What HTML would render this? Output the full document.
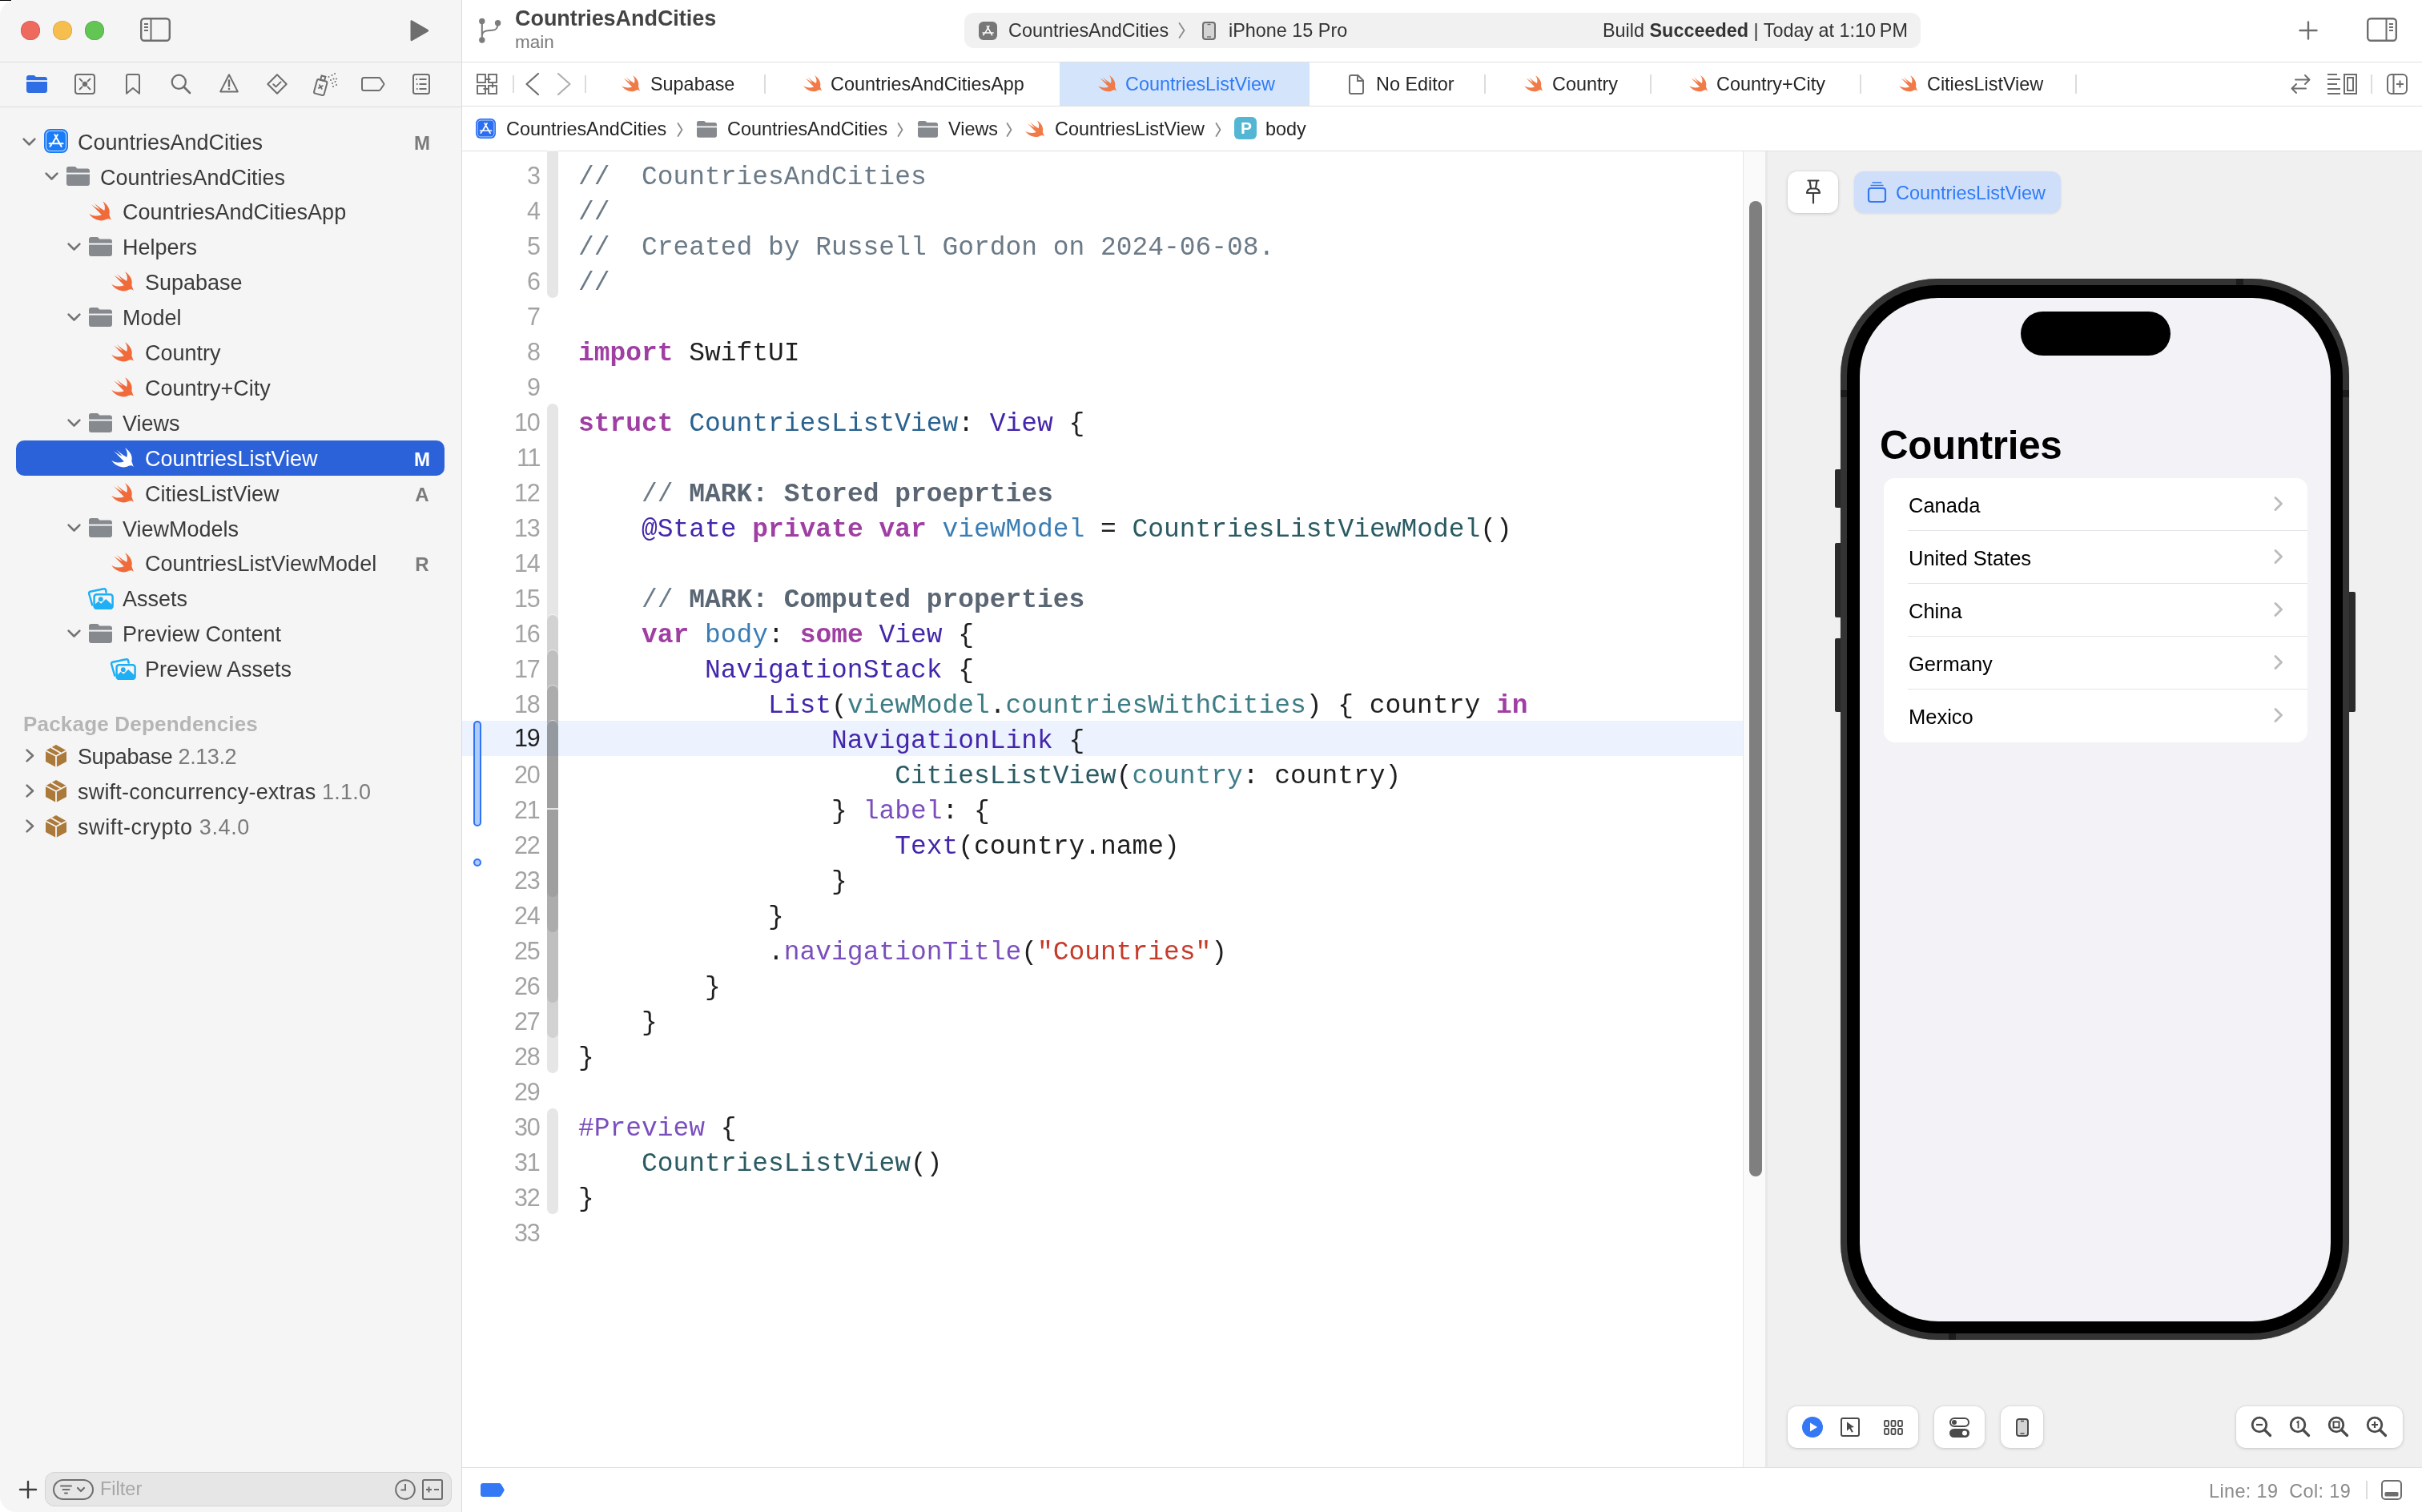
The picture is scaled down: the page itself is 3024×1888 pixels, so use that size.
<!DOCTYPE html>
<html><head><meta charset="utf-8">
<style>
*{box-sizing:border-box;margin:0;padding:0}
html,body{width:3024px;height:1888px;overflow:hidden;background:#fff}
body{position:relative;font-family:"Liberation Sans",sans-serif;color:#262626}
.a{position:absolute}
.t{position:absolute;white-space:nowrap;line-height:0;will-change:transform}
svg{position:absolute;overflow:visible}
.cl{position:absolute;left:721.5px;white-space:pre;line-height:0;font-family:"Liberation Mono",monospace;font-size:32.93px;color:#1f1f1f;will-change:transform}
.k{color:#a03fa3;font-weight:bold}
.c{color:#6b7a87}
.m{color:#5a6673;font-weight:bold}
.ty{color:#4326ab}
.dt{color:#2a628f}
.do{color:#3a7db4}
.pt{color:#2a5a62}
.pp{color:#3e7d86}
.of{color:#7a4fbd}
.st{color:#c63a2a}
</style></head><body>

<div class="a" style="left:0;top:0;width:577px;height:1888px;background:#f5f5f5;border-radius:20px 0 0 20px"></div>
<div class="a" style="left:0;top:0;width:14px;height:1px;background:#000"></div>
<div class="a" style="left:576px;top:0;width:1px;height:1888px;background:#dcdcdc"></div>
<div class="a" style="left:0;top:77px;width:576px;height:1px;background:#dcdcdc"></div>
<div class="a" style="left:0;top:133px;width:576px;height:1px;background:#dcdcdc"></div>
<div class="a" style="left:26px;top:26px;width:24px;height:24px;border-radius:50%;background:#ee6a5f;box-shadow:inset 0 0 0 0.6px #d9534a"></div>
<div class="a" style="left:66px;top:26px;width:24px;height:24px;border-radius:50%;background:#f5be4f;box-shadow:inset 0 0 0 0.6px #dba43c"></div>
<div class="a" style="left:106px;top:26px;width:24px;height:24px;border-radius:50%;background:#62c554;box-shadow:inset 0 0 0 0.6px #4ea843"></div>
<svg style="left:28px;top:171.5px" width="17" height="11" viewBox="0 0 17 11"><path d="M1.6 1.6l6.9 6.9 6.9-6.9" fill="none" stroke="#737373" stroke-width="2.6" stroke-linecap="round" stroke-linejoin="round"/></svg>
<svg style="left:55px;top:161.0px" width="30" height="30" viewBox="0 0 30 30"><rect width="30" height="30" rx="7.5" fill="#1a7cf7"/><rect x="2.5" y="2.5" width="25" height="25" rx="5.2" fill="none" stroke="#c4dcfc" stroke-width="1.1"/><path d="M13.4 7.2l8.3 14.8M16.8 7.2L10.9 17.4M6.6 18.3h17M7.4 21.8l1.6-2" fill="none" stroke="#fff" stroke-width="2" stroke-linecap="round"/></svg>
<div class="t" style="left:97px;top:177.64px;font-size:27px;color:#3b3b3b">CountriesAndCities</div>
<div class="t" style="left:517px;top:178.68px;font-size:24px;font-weight:bold;color:#7b7b7b;width:20px;text-align:center">M</div>
<svg style="left:56px;top:215.4px" width="17" height="11" viewBox="0 0 17 11"><path d="M1.6 1.6l6.9 6.9 6.9-6.9" fill="none" stroke="#737373" stroke-width="2.6" stroke-linecap="round" stroke-linejoin="round"/></svg>
<svg style="left:83px;top:208.4px" width="29" height="24.0" viewBox="0 0 29 24"><path fill="#868a8f" d="M2.6 0h7c1.1 0 1.7.3 2.5 1.1l1.2 1.3H26.2c1.6 0 2.8 1.2 2.8 2.8V21.3c0 1.5-1.2 2.7-2.7 2.7H2.7C1.2 24 0 22.8 0 21.3V2.6C0 1.2 1.2 0 2.6 0z"/><rect x="0" y="7.6" width="29" height="2" fill="#f5f5f5"/></svg>
<div class="t" style="left:125px;top:221.54px;font-size:27px;color:#3b3b3b">CountriesAndCities</div>
<svg style="left:111px;top:251.3px" width="29" height="25.1" viewBox="0 0 30 26"><path fill="#f06a3a" d="M17.6,0.2C24.3,4.4 28,11 26.2,17.6L28.9,25C27.2,22.8 25,22.4 22.3,23.6C16.5,27.1 6.5,25.2 0.2,16.6C5,19.6 11.5,20 16.4,18L3.2,4.5C7.8,7.8 11.3,10 14.5,11.6L6.9,2.8C11.5,6.6 15.5,10 19.9,12.4C21.4,8.5 20.5,4 17.6,0.2Z"/></svg>
<div class="t" style="left:153px;top:265.44px;font-size:27px;color:#3b3b3b">CountriesAndCitiesApp</div>
<svg style="left:84px;top:303.2px" width="17" height="11" viewBox="0 0 17 11"><path d="M1.6 1.6l6.9 6.9 6.9-6.9" fill="none" stroke="#737373" stroke-width="2.6" stroke-linecap="round" stroke-linejoin="round"/></svg>
<svg style="left:111px;top:296.2px" width="29" height="24.0" viewBox="0 0 29 24"><path fill="#868a8f" d="M2.6 0h7c1.1 0 1.7.3 2.5 1.1l1.2 1.3H26.2c1.6 0 2.8 1.2 2.8 2.8V21.3c0 1.5-1.2 2.7-2.7 2.7H2.7C1.2 24 0 22.8 0 21.3V2.6C0 1.2 1.2 0 2.6 0z"/><rect x="0" y="7.6" width="29" height="2" fill="#f5f5f5"/></svg>
<div class="t" style="left:153px;top:309.34px;font-size:27px;color:#3b3b3b">Helpers</div>
<svg style="left:139px;top:339.1px" width="29" height="25.1" viewBox="0 0 30 26"><path fill="#f06a3a" d="M17.6,0.2C24.3,4.4 28,11 26.2,17.6L28.9,25C27.2,22.8 25,22.4 22.3,23.6C16.5,27.1 6.5,25.2 0.2,16.6C5,19.6 11.5,20 16.4,18L3.2,4.5C7.8,7.8 11.3,10 14.5,11.6L6.9,2.8C11.5,6.6 15.5,10 19.9,12.4C21.4,8.5 20.5,4 17.6,0.2Z"/></svg>
<div class="t" style="left:181px;top:353.24px;font-size:27px;color:#3b3b3b">Supabase</div>
<svg style="left:84px;top:391.0px" width="17" height="11" viewBox="0 0 17 11"><path d="M1.6 1.6l6.9 6.9 6.9-6.9" fill="none" stroke="#737373" stroke-width="2.6" stroke-linecap="round" stroke-linejoin="round"/></svg>
<svg style="left:111px;top:384.0px" width="29" height="24.0" viewBox="0 0 29 24"><path fill="#868a8f" d="M2.6 0h7c1.1 0 1.7.3 2.5 1.1l1.2 1.3H26.2c1.6 0 2.8 1.2 2.8 2.8V21.3c0 1.5-1.2 2.7-2.7 2.7H2.7C1.2 24 0 22.8 0 21.3V2.6C0 1.2 1.2 0 2.6 0z"/><rect x="0" y="7.6" width="29" height="2" fill="#f5f5f5"/></svg>
<div class="t" style="left:153px;top:397.14px;font-size:27px;color:#3b3b3b">Model</div>
<svg style="left:139px;top:426.9px" width="29" height="25.1" viewBox="0 0 30 26"><path fill="#f06a3a" d="M17.6,0.2C24.3,4.4 28,11 26.2,17.6L28.9,25C27.2,22.8 25,22.4 22.3,23.6C16.5,27.1 6.5,25.2 0.2,16.6C5,19.6 11.5,20 16.4,18L3.2,4.5C7.8,7.8 11.3,10 14.5,11.6L6.9,2.8C11.5,6.6 15.5,10 19.9,12.4C21.4,8.5 20.5,4 17.6,0.2Z"/></svg>
<div class="t" style="left:181px;top:441.04px;font-size:27px;color:#3b3b3b">Country</div>
<svg style="left:139px;top:470.8px" width="29" height="25.1" viewBox="0 0 30 26"><path fill="#f06a3a" d="M17.6,0.2C24.3,4.4 28,11 26.2,17.6L28.9,25C27.2,22.8 25,22.4 22.3,23.6C16.5,27.1 6.5,25.2 0.2,16.6C5,19.6 11.5,20 16.4,18L3.2,4.5C7.8,7.8 11.3,10 14.5,11.6L6.9,2.8C11.5,6.6 15.5,10 19.9,12.4C21.4,8.5 20.5,4 17.6,0.2Z"/></svg>
<div class="t" style="left:181px;top:484.94px;font-size:27px;color:#3b3b3b">Country+City</div>
<svg style="left:84px;top:522.7px" width="17" height="11" viewBox="0 0 17 11"><path d="M1.6 1.6l6.9 6.9 6.9-6.9" fill="none" stroke="#737373" stroke-width="2.6" stroke-linecap="round" stroke-linejoin="round"/></svg>
<svg style="left:111px;top:515.7px" width="29" height="24.0" viewBox="0 0 29 24"><path fill="#868a8f" d="M2.6 0h7c1.1 0 1.7.3 2.5 1.1l1.2 1.3H26.2c1.6 0 2.8 1.2 2.8 2.8V21.3c0 1.5-1.2 2.7-2.7 2.7H2.7C1.2 24 0 22.8 0 21.3V2.6C0 1.2 1.2 0 2.6 0z"/><rect x="0" y="7.6" width="29" height="2" fill="#f5f5f5"/></svg>
<div class="t" style="left:153px;top:528.84px;font-size:27px;color:#3b3b3b">Views</div>
<div class="a" style="left:20px;top:550.1px;width:535px;height:44px;border-radius:10px;background:#2c62d9"></div>
<svg style="left:139px;top:558.5999999999999px" width="29" height="25.1" viewBox="0 0 30 26"><path fill="#ffffff" d="M17.6,0.2C24.3,4.4 28,11 26.2,17.6L28.9,25C27.2,22.8 25,22.4 22.3,23.6C16.5,27.1 6.5,25.2 0.2,16.6C5,19.6 11.5,20 16.4,18L3.2,4.5C7.8,7.8 11.3,10 14.5,11.6L6.9,2.8C11.5,6.6 15.5,10 19.9,12.4C21.4,8.5 20.5,4 17.6,0.2Z"/></svg>
<div class="t" style="left:181px;top:572.74px;font-size:27px;color:#ffffff">CountriesListView</div>
<div class="t" style="left:517px;top:573.78px;font-size:24px;font-weight:bold;color:#ffffff;width:20px;text-align:center">M</div>
<svg style="left:139px;top:602.5px" width="29" height="25.1" viewBox="0 0 30 26"><path fill="#f06a3a" d="M17.6,0.2C24.3,4.4 28,11 26.2,17.6L28.9,25C27.2,22.8 25,22.4 22.3,23.6C16.5,27.1 6.5,25.2 0.2,16.6C5,19.6 11.5,20 16.4,18L3.2,4.5C7.8,7.8 11.3,10 14.5,11.6L6.9,2.8C11.5,6.6 15.5,10 19.9,12.4C21.4,8.5 20.5,4 17.6,0.2Z"/></svg>
<div class="t" style="left:181px;top:616.64px;font-size:27px;color:#3b3b3b">CitiesListView</div>
<div class="t" style="left:517px;top:617.68px;font-size:24px;font-weight:bold;color:#7b7b7b;width:20px;text-align:center">A</div>
<svg style="left:84px;top:654.4px" width="17" height="11" viewBox="0 0 17 11"><path d="M1.6 1.6l6.9 6.9 6.9-6.9" fill="none" stroke="#737373" stroke-width="2.6" stroke-linecap="round" stroke-linejoin="round"/></svg>
<svg style="left:111px;top:647.4px" width="29" height="24.0" viewBox="0 0 29 24"><path fill="#868a8f" d="M2.6 0h7c1.1 0 1.7.3 2.5 1.1l1.2 1.3H26.2c1.6 0 2.8 1.2 2.8 2.8V21.3c0 1.5-1.2 2.7-2.7 2.7H2.7C1.2 24 0 22.8 0 21.3V2.6C0 1.2 1.2 0 2.6 0z"/><rect x="0" y="7.6" width="29" height="2" fill="#f5f5f5"/></svg>
<div class="t" style="left:153px;top:660.54px;font-size:27px;color:#3b3b3b">ViewModels</div>
<svg style="left:139px;top:690.3px" width="29" height="25.1" viewBox="0 0 30 26"><path fill="#f06a3a" d="M17.6,0.2C24.3,4.4 28,11 26.2,17.6L28.9,25C27.2,22.8 25,22.4 22.3,23.6C16.5,27.1 6.5,25.2 0.2,16.6C5,19.6 11.5,20 16.4,18L3.2,4.5C7.8,7.8 11.3,10 14.5,11.6L6.9,2.8C11.5,6.6 15.5,10 19.9,12.4C21.4,8.5 20.5,4 17.6,0.2Z"/></svg>
<div class="t" style="left:181px;top:704.44px;font-size:27px;color:#3b3b3b">CountriesListViewModel</div>
<div class="t" style="left:517px;top:705.48px;font-size:24px;font-weight:bold;color:#7b7b7b;width:20px;text-align:center">R</div>
<svg style="left:109px;top:733.6999999999999px" width="33" height="27.0" viewBox="0 0 33 27"><path d="M6.5 22.5L2.2 7.5c-.4-1.3.3-2.5 1.6-2.8L20.5 1.3c1.3-.3 2.4.6 2.7 1.9l.6 3.4" fill="none" stroke="#1eaff5" stroke-width="2.5"/><rect x="8.6" y="8.3" width="23" height="17.5" rx="3" fill="none" stroke="#1eaff5" stroke-width="2.5"/><path d="M8.6 21.5l5.3-4.8 3.3 3 6-5.8 8.4 7.8v2.5c0 1.6-1.3 2.8-2.8 2.8H11.4c-1.6 0-2.8-1.2-2.8-2.8z" fill="#1eaff5"/><circle cx="16.8" cy="14.2" r="2.9" fill="#1eaff5"/></svg>
<div class="t" style="left:153px;top:748.34px;font-size:27px;color:#3b3b3b">Assets</div>
<svg style="left:84px;top:786.1px" width="17" height="11" viewBox="0 0 17 11"><path d="M1.6 1.6l6.9 6.9 6.9-6.9" fill="none" stroke="#737373" stroke-width="2.6" stroke-linecap="round" stroke-linejoin="round"/></svg>
<svg style="left:111px;top:779.1px" width="29" height="24.0" viewBox="0 0 29 24"><path fill="#868a8f" d="M2.6 0h7c1.1 0 1.7.3 2.5 1.1l1.2 1.3H26.2c1.6 0 2.8 1.2 2.8 2.8V21.3c0 1.5-1.2 2.7-2.7 2.7H2.7C1.2 24 0 22.8 0 21.3V2.6C0 1.2 1.2 0 2.6 0z"/><rect x="0" y="7.6" width="29" height="2" fill="#f5f5f5"/></svg>
<div class="t" style="left:153px;top:792.24px;font-size:27px;color:#3b3b3b">Preview Content</div>
<svg style="left:137px;top:821.5px" width="33" height="27.0" viewBox="0 0 33 27"><path d="M6.5 22.5L2.2 7.5c-.4-1.3.3-2.5 1.6-2.8L20.5 1.3c1.3-.3 2.4.6 2.7 1.9l.6 3.4" fill="none" stroke="#1eaff5" stroke-width="2.5"/><rect x="8.6" y="8.3" width="23" height="17.5" rx="3" fill="none" stroke="#1eaff5" stroke-width="2.5"/><path d="M8.6 21.5l5.3-4.8 3.3 3 6-5.8 8.4 7.8v2.5c0 1.6-1.3 2.8-2.8 2.8H11.4c-1.6 0-2.8-1.2-2.8-2.8z" fill="#1eaff5"/><circle cx="16.8" cy="14.2" r="2.9" fill="#1eaff5"/></svg>
<div class="t" style="left:181px;top:836.14px;font-size:27px;color:#3b3b3b">Preview Assets</div>
<div class="t" style="left:29px;top:903.99px;font-size:26px;font-weight:bold;color:#b5b5b5;letter-spacing:0.2px">Package Dependencies</div>
<svg style="left:32px;top:935px" width="11" height="17" viewBox="0 0 11 17"><path d="M1.6 1.6l7.4 6.9-7.4 6.9" fill="none" stroke="#737373" stroke-width="2.6" stroke-linecap="round" stroke-linejoin="round"/></svg>
<svg style="left:57px;top:930px" width="26" height="28.0" viewBox="0 0 26 28"><path d="M13 0L26 7.2V21L13 28 0 21V7.2z" fill="#ab7a3a"/><path d="M0 7.2l13 6.8 13-6.8M13 14V28M6.8 3.4l12 6.8" fill="none" stroke="#f5f5f5" stroke-width="1.8"/></svg>
<div class="t" style="left:97px;top:944.64px;font-size:27px;color:#3b3b3b;letter-spacing:-0.4px">Supabase <span style="color:#7b7b7b">2.13.2</span></div>
<svg style="left:32px;top:979px" width="11" height="17" viewBox="0 0 11 17"><path d="M1.6 1.6l7.4 6.9-7.4 6.9" fill="none" stroke="#737373" stroke-width="2.6" stroke-linecap="round" stroke-linejoin="round"/></svg>
<svg style="left:57px;top:974px" width="26" height="28.0" viewBox="0 0 26 28"><path d="M13 0L26 7.2V21L13 28 0 21V7.2z" fill="#ab7a3a"/><path d="M0 7.2l13 6.8 13-6.8M13 14V28M6.8 3.4l12 6.8" fill="none" stroke="#f5f5f5" stroke-width="1.8"/></svg>
<div class="t" style="left:97px;top:988.64px;font-size:27px;color:#3b3b3b;letter-spacing:0.2px">swift-concurrency-extras <span style="color:#7b7b7b">1.1.0</span></div>
<svg style="left:32px;top:1023px" width="11" height="17" viewBox="0 0 11 17"><path d="M1.6 1.6l7.4 6.9-7.4 6.9" fill="none" stroke="#737373" stroke-width="2.6" stroke-linecap="round" stroke-linejoin="round"/></svg>
<svg style="left:57px;top:1018px" width="26" height="28.0" viewBox="0 0 26 28"><path d="M13 0L26 7.2V21L13 28 0 21V7.2z" fill="#ab7a3a"/><path d="M0 7.2l13 6.8 13-6.8M13 14V28M6.8 3.4l12 6.8" fill="none" stroke="#f5f5f5" stroke-width="1.8"/></svg>
<div class="t" style="left:97px;top:1032.64px;font-size:27px;color:#3b3b3b;letter-spacing:0.6px">swift-crypto <span style="color:#7b7b7b">3.4.0</span></div>
<svg style="left:175px;top:22px" width="38" height="30" viewBox="0 0 38 30"><rect x="1.2" y="1.2" width="35.6" height="27.6" rx="4" fill="none" stroke="#6e6e6e" stroke-width="2.4"/><path d="M13.5 1.5v27M5 8h5M5 12h5M5 16h5" fill="none" stroke="#6e6e6e" stroke-width="2"/></svg>
<svg style="left:510px;top:24px" width="27" height="28" viewBox="0 0 27 28"><path d="M2.5 2.2v23.6c0 1.1 1 1.7 2 1.1l20-11.5c.9-.6.9-1.8 0-2.4l-20-11.5C3.5.9 2.5 1.1 2.5 2.2z" fill="#6e6e6e"/></svg>
<svg style="left:33px;top:94px" width="26" height="22" viewBox="0 0 26 22"><path fill="#2f6de5" d="M3 0h5.5c1 0 1.6.3 2.3 1l1 1H23c1.7 0 3 1.3 3 3v14c0 1.7-1.3 3-3 3H3c-1.7 0-3-1.3-3-3V3c0-1.7 1.3-3 3-3z"/><rect x="0" y="6.2" width="26" height="1.8" fill="#f5f5f5"/></svg>
<svg style="left:93px;top:92px" width="26" height="26" viewBox="0 0 26 26"><rect x="1" y="1" width="24" height="24" rx="3" fill="none" stroke="#6e6e6e" stroke-width="2"/><circle cx="13" cy="13" r="3.2" fill="#6e6e6e"/><path d="M6.5 6.5l3 3M19.5 6.5l-3 3M6.5 19.5l3-3M19.5 19.5l-3-3" stroke="#6e6e6e" stroke-width="1.8" stroke-linecap="round"/></svg>
<svg style="left:157px;top:92px" width="18" height="26" viewBox="0 0 18 26"><path d="M1 24.8V3c0-1.1.9-2 2-2h12c1.1 0 2 .9 2 2v21.8L9 18z" fill="none" stroke="#6e6e6e" stroke-width="2" stroke-linejoin="round"/></svg>
<svg style="left:213px;top:92px" width="26" height="26" viewBox="0 0 26 26"><circle cx="10.3" cy="10.3" r="8.6" fill="none" stroke="#6e6e6e" stroke-width="2.2"/><path d="M16.5 16.5l7.5 7.5" stroke="#6e6e6e" stroke-width="2.6" stroke-linecap="round"/></svg>
<svg style="left:274px;top:92px" width="24" height="24" viewBox="0 0 24 24"><path d="M12 1.3L1.2 22.4h21.6z" fill="none" stroke="#6e6e6e" stroke-width="2" stroke-linejoin="round"/><path d="M12 8.5v7" stroke="#6e6e6e" stroke-width="2.4" stroke-linecap="round"/><circle cx="12" cy="19" r="1.3" fill="#6e6e6e"/></svg>
<svg style="left:333px;top:92px" width="26" height="26" viewBox="0 0 26 26"><path d="M13 1.3L24.7 13 13 24.7 1.3 13z" fill="none" stroke="#6e6e6e" stroke-width="2" stroke-linejoin="round"/><path d="M8.3 13.2l3.2 3.2 6-6" fill="none" stroke="#6e6e6e" stroke-width="2" stroke-linecap="round" stroke-linejoin="round"/></svg>
<svg style="left:391px;top:91px" width="31" height="28" viewBox="0 0 31 28"><g transform="rotate(15 9 17)"><rect x="3" y="9" width="13" height="18" rx="2" fill="none" stroke="#6e6e6e" stroke-width="2"/><rect x="7" y="3.5" width="5" height="5.5" fill="none" stroke="#6e6e6e" stroke-width="2"/><path d="M7 15l5 5M12 15l-5 5" stroke="#6e6e6e" stroke-width="1.8"/></g><g fill="#6e6e6e"><circle cx="19.5" cy="5" r="1"/><circle cx="23.5" cy="3" r="1"/><circle cx="27" cy="1" r="1"/><circle cx="22" cy="9" r="1"/><circle cx="25.5" cy="7.5" r="1"/><circle cx="29" cy="7.5" r="1"/><circle cx="24" cy="13" r="1"/><circle cx="27.5" cy="11" r="1"/><circle cx="25" cy="17" r="1"/><circle cx="29" cy="15" r="1"/></g></svg>
<svg style="left:451px;top:96px" width="30" height="18" viewBox="0 0 30 18"><path d="M3.5 1h18.5c.8 0 1.5.4 1.9 1l4.3 6.2c.3.5.3 1.1 0 1.6l-4.3 6.2c-.4.6-1.1 1-1.9 1H3.5C2.1 17 1 15.9 1 14.5v-11C1 2.1 2.1 1 3.5 1z" fill="none" stroke="#6e6e6e" stroke-width="2"/></svg>
<svg style="left:515px;top:92px" width="22" height="26" viewBox="0 0 22 26"><rect x="1" y="1" width="20" height="24" rx="2.5" fill="none" stroke="#6e6e6e" stroke-width="2"/><path d="M8.5 7h9M8.5 13h9M8.5 19h9" stroke="#6e6e6e" stroke-width="2"/><path d="M4.5 7h1.5M5 13h1.5M5 19h1.5" stroke="#6e6e6e" stroke-width="2"/></svg>
<div class="a" style="left:56px;top:1838px;width:508px;height:43px;border-radius:12px;background:#e6e6e6;border:1px solid #d3d3d3"></div>
<svg style="left:24px;top:1849px" width="22" height="22" viewBox="0 0 22 22"><path d="M11 1v20M1 11h20" stroke="#3d3d3d" stroke-width="2.4" stroke-linecap="round"/></svg>
<svg style="left:66px;top:1847px" width="51" height="26" viewBox="0 0 51 26"><rect x="1" y="1" width="49" height="24" rx="12" fill="none" stroke="#6e6e6e" stroke-width="2"/><path d="M10 8.5h13M12.5 13h8M15 17.5h3" stroke="#6e6e6e" stroke-width="2" stroke-linecap="round"/><path d="M31 11l4 4 4-4" fill="none" stroke="#6e6e6e" stroke-width="2.2" stroke-linecap="round" stroke-linejoin="round"/></svg>
<div class="t" style="left:125px;top:1858.86px;font-size:23.5px;color:#a6a6a6">Filter</div>
<svg style="left:493px;top:1847px" width="26" height="26" viewBox="0 0 26 26"><circle cx="13" cy="13" r="11.8" fill="none" stroke="#6e6e6e" stroke-width="2"/><path d="M13 6v7.5H7.5" fill="none" stroke="#6e6e6e" stroke-width="2"/></svg>
<svg style="left:527px;top:1847px" width="26" height="26" viewBox="0 0 26 26"><rect x="1" y="1" width="24" height="24" rx="1.5" fill="none" stroke="#6e6e6e" stroke-width="2"/><path d="M5 13h7M8.5 9.5v7M15 13h6" stroke="#6e6e6e" stroke-width="2"/></svg>
<div class="a" style="left:577px;top:77px;width:2447px;height:1px;background:#e0e0e0"></div>
<div class="a" style="left:577px;top:132px;width:2447px;height:1px;background:#e0e0e0"></div>
<div class="a" style="left:577px;top:188px;width:2447px;height:1px;background:#e0e0e0"></div>
<div class="a" style="left:577px;top:1832px;width:2447px;height:1px;background:#e0e0e0"></div>
<svg style="left:597px;top:22px" width="30" height="32" viewBox="0 0 30 32"><g fill="#7c7c7c"><circle cx="4.8" cy="4.5" r="3.7"/><circle cx="4.8" cy="28" r="3.7"/><circle cx="24.6" cy="6.8" r="3.7"/></g><path d="M4.8 4.5V28M24.6 6.8C24.6 13 23 15.6 18 15.8L12 16.2C7.5 16.6 4.8 18.5 4.8 22.5" fill="none" stroke="#7c7c7c" stroke-width="2.1"/></svg>
<div class="t" style="left:643px;top:23.14px;font-size:27px;font-weight:bold;color:#444;letter-spacing:-0.05px">CountriesAndCities</div>
<div class="t" style="left:643px;top:52.80px;font-size:22.5px;color:#7b7b7b">main</div>
<div class="a" style="left:1204px;top:16px;width:1194px;height:44px;border-radius:12px;background:#f1f1f1"></div>
<svg style="left:1222px;top:27px" width="23" height="23" viewBox="0 0 30 30"><rect width="30" height="30" rx="7.5" fill="#777777"/><path d="M13.4 7.2l8.3 14.8M16.8 7.2L10.9 17.4M6.6 18.3h17M7.4 21.8l1.6-2" fill="none" stroke="#fff" stroke-width="2" stroke-linecap="round"/></svg>
<div class="t" style="left:1259px;top:37.89px;font-size:23.4px;color:#333">CountriesAndCities</div>
<svg style="left:1471px;top:27px" width="9" height="22" viewBox="0 0 9 22"><path d="M1.5 2l6 9-6 9" fill="none" stroke="#8a8a8a" stroke-width="1.8" stroke-linecap="round"/></svg>
<svg style="left:1501px;top:27px" width="17" height="23" viewBox="0 0 17 23"><rect x="1" y="1" width="15" height="21" rx="3" fill="#d4d4d4" stroke="#6e6e6e" stroke-width="2"/><path d="M6 19h5" stroke="#6e6e6e" stroke-width="1.4"/><path d="M6.5 3.5h4" stroke="#6e6e6e" stroke-width="1.4"/></svg>
<div class="t" style="left:1534px;top:37.89px;font-size:23.4px;color:#333">iPhone 15 Pro</div>
<div class="t" style="right:642px;top:37.9px;font-size:23.4px;color:#333">Build <b>Succeeded</b> | Today at 1:10&#8201;PM</div>
<svg style="left:2870px;top:26px" width="24" height="24" viewBox="0 0 24 24"><path d="M12 1.5v21M1.5 12h21" stroke="#6e6e6e" stroke-width="2.4" stroke-linecap="round"/></svg>
<svg style="left:2955px;top:22px" width="38" height="30" viewBox="0 0 38 30"><rect x="1.2" y="1.2" width="35.6" height="27.6" rx="4" fill="none" stroke="#6e6e6e" stroke-width="2.4"/><path d="M24.5 1.5v27M28 8h5M28 12h5M28 16h5" fill="none" stroke="#6e6e6e" stroke-width="2"/></svg>
<svg style="left:594px;top:91px" width="28" height="28" viewBox="0 0 28 28"><g fill="none" stroke="#6e6e6e" stroke-width="1.9"><rect x="2" y="2" width="10" height="10"/><rect x="16" y="2" width="10" height="10"/><rect x="2" y="16" width="10" height="10"/><rect x="16" y="16" width="10" height="10"/><path d="M12 8h6.5M21 12v6.5M9.5 20H16"/></g></svg>
<div class="a" style="left:640px;top:94px;width:1.5px;height:22px;background:#dcdcdc"></div>
<svg style="left:655px;top:90px" width="19" height="30" viewBox="0 0 19 30"><path d="M17 2L2.5 15 17 28" fill="none" stroke="#6e6e6e" stroke-width="2.2" stroke-linecap="round" stroke-linejoin="round"/></svg>
<svg style="left:695px;top:90px" width="19" height="30" viewBox="0 0 19 30"><path d="M2 2l14.5 13L2 28" fill="none" stroke="#b0b0b0" stroke-width="2.2" stroke-linecap="round" stroke-linejoin="round"/></svg>
<div class="a" style="left:730px;top:94px;width:1.5px;height:22px;background:#dcdcdc"></div>
<div class="a" style="left:1323px;top:78px;width:312px;height:54px;background:#d4e4fb"></div>
<svg style="left:776px;top:94px" width="24" height="20.8" viewBox="0 0 30 26"><path fill="#f07a48" d="M17.6,0.2C24.3,4.4 28,11 26.2,17.6L28.9,25C27.2,22.8 25,22.4 22.3,23.6C16.5,27.1 6.5,25.2 0.2,16.6C5,19.6 11.5,20 16.4,18L3.2,4.5C7.8,7.8 11.3,10 14.5,11.6L6.9,2.8C11.5,6.6 15.5,10 19.9,12.4C21.4,8.5 20.5,4 17.6,0.2Z"/></svg>
<div class="t" style="left:812px;top:105.39px;font-size:23.4px;color:#262626">Supabase</div>
<svg style="left:1003px;top:94px" width="24" height="20.8" viewBox="0 0 30 26"><path fill="#f07a48" d="M17.6,0.2C24.3,4.4 28,11 26.2,17.6L28.9,25C27.2,22.8 25,22.4 22.3,23.6C16.5,27.1 6.5,25.2 0.2,16.6C5,19.6 11.5,20 16.4,18L3.2,4.5C7.8,7.8 11.3,10 14.5,11.6L6.9,2.8C11.5,6.6 15.5,10 19.9,12.4C21.4,8.5 20.5,4 17.6,0.2Z"/></svg>
<div class="t" style="left:1037px;top:105.39px;font-size:23.4px;color:#262626">CountriesAndCitiesApp</div>
<svg style="left:1371px;top:94px" width="24" height="20.8" viewBox="0 0 30 26"><path fill="#f07a48" d="M17.6,0.2C24.3,4.4 28,11 26.2,17.6L28.9,25C27.2,22.8 25,22.4 22.3,23.6C16.5,27.1 6.5,25.2 0.2,16.6C5,19.6 11.5,20 16.4,18L3.2,4.5C7.8,7.8 11.3,10 14.5,11.6L6.9,2.8C11.5,6.6 15.5,10 19.9,12.4C21.4,8.5 20.5,4 17.6,0.2Z"/></svg>
<div class="t" style="left:1405px;top:105.39px;font-size:23.4px;color:#2f7cf6">CountriesListView</div>
<svg style="left:1684px;top:93px" width="19" height="25" viewBox="0 0 19 25"><path d="M3 1h8.5L18 7.5V22c0 1.1-.9 2-2 2H3c-1.1 0-2-.9-2-2V3c0-1.1.9-2 2-2z" fill="none" stroke="#6e6e6e" stroke-width="2"/><path d="M11 1v7h7" fill="none" stroke="#6e6e6e" stroke-width="2"/></svg>
<div class="t" style="left:1718px;top:105.39px;font-size:23.4px;color:#262626">No Editor</div>
<svg style="left:1903px;top:94px" width="24" height="20.8" viewBox="0 0 30 26"><path fill="#f07a48" d="M17.6,0.2C24.3,4.4 28,11 26.2,17.6L28.9,25C27.2,22.8 25,22.4 22.3,23.6C16.5,27.1 6.5,25.2 0.2,16.6C5,19.6 11.5,20 16.4,18L3.2,4.5C7.8,7.8 11.3,10 14.5,11.6L6.9,2.8C11.5,6.6 15.5,10 19.9,12.4C21.4,8.5 20.5,4 17.6,0.2Z"/></svg>
<div class="t" style="left:1938px;top:105.39px;font-size:23.4px;color:#262626">Country</div>
<svg style="left:2109px;top:94px" width="24" height="20.8" viewBox="0 0 30 26"><path fill="#f07a48" d="M17.6,0.2C24.3,4.4 28,11 26.2,17.6L28.9,25C27.2,22.8 25,22.4 22.3,23.6C16.5,27.1 6.5,25.2 0.2,16.6C5,19.6 11.5,20 16.4,18L3.2,4.5C7.8,7.8 11.3,10 14.5,11.6L6.9,2.8C11.5,6.6 15.5,10 19.9,12.4C21.4,8.5 20.5,4 17.6,0.2Z"/></svg>
<div class="t" style="left:2143px;top:105.39px;font-size:23.4px;color:#262626">Country+City</div>
<svg style="left:2371px;top:94px" width="24" height="20.8" viewBox="0 0 30 26"><path fill="#f07a48" d="M17.6,0.2C24.3,4.4 28,11 26.2,17.6L28.9,25C27.2,22.8 25,22.4 22.3,23.6C16.5,27.1 6.5,25.2 0.2,16.6C5,19.6 11.5,20 16.4,18L3.2,4.5C7.8,7.8 11.3,10 14.5,11.6L6.9,2.8C11.5,6.6 15.5,10 19.9,12.4C21.4,8.5 20.5,4 17.6,0.2Z"/></svg>
<div class="t" style="left:2406px;top:105.39px;font-size:23.4px;color:#262626">CitiesListView</div>
<div class="a" style="left:954px;top:93px;width:1.5px;height:24px;background:#dcdcdc"></div>
<div class="a" style="left:1853px;top:93px;width:1.5px;height:24px;background:#dcdcdc"></div>
<div class="a" style="left:2060px;top:93px;width:1.5px;height:24px;background:#dcdcdc"></div>
<div class="a" style="left:2322px;top:93px;width:1.5px;height:24px;background:#dcdcdc"></div>
<div class="a" style="left:2591px;top:93px;width:1.5px;height:24px;background:#dcdcdc"></div>
<svg style="left:2860px;top:92px" width="25" height="26" viewBox="0 0 25 26"><path d="M6 7.5h17.5M18 2l5.5 5.5L18 13M19 18.5H1.5M7 13l-5.5 5.5L7 24" fill="none" stroke="#6e6e6e" stroke-width="2" stroke-linecap="round" stroke-linejoin="round"/></svg>
<svg style="left:2906px;top:92px" width="37" height="26" viewBox="0 0 37 26"><path d="M0 1h12M0 7h16M0 13h12M0 19h16M0 25h16" stroke="#6e6e6e" stroke-width="2"/><rect x="21" y="1" width="15" height="24" fill="none" stroke="#6e6e6e" stroke-width="2"/><rect x="25" y="5" width="7" height="16" fill="none" stroke="#6e6e6e" stroke-width="2"/></svg>
<div class="a" style="left:2960px;top:93px;width:1.5px;height:24px;background:#dcdcdc"></div>
<svg style="left:2980px;top:92px" width="26" height="26" viewBox="0 0 26 26"><rect x="1" y="1" width="24" height="24" rx="5" fill="none" stroke="#6e6e6e" stroke-width="2"/><path d="M8.5 1v24M16.5 8.5v9M12 13h9" stroke="#6e6e6e" stroke-width="2"/></svg>
<svg style="left:594px;top:148px" width="25" height="25" viewBox="0 0 30 30"><rect width="30" height="30" rx="7.5" fill="#2c6ef2"/><rect x="2.5" y="2.5" width="25" height="25" rx="5.2" fill="none" stroke="#c4dcfc" stroke-width="1.1"/><path d="M13.4 7.2l8.3 14.8M16.8 7.2L10.9 17.4M6.6 18.3h17M7.4 21.8l1.6-2" fill="none" stroke="#fff" stroke-width="2" stroke-linecap="round"/></svg>
<div class="t" style="left:632px;top:160.89px;font-size:23.4px;color:#262626">CountriesAndCities</div>
<svg style="left:845px;top:152px" width="8" height="20" viewBox="0 0 8 20"><path d="M1.5 2l5 8-5 8" fill="none" stroke="#8a8a8a" stroke-width="1.8" stroke-linecap="round"/></svg>
<svg style="left:870px;top:151px" width="25" height="20.7" viewBox="0 0 29 24"><path fill="#868a8f" d="M2.6 0h7c1.1 0 1.7.3 2.5 1.1l1.2 1.3H26.2c1.6 0 2.8 1.2 2.8 2.8V21.3c0 1.5-1.2 2.7-2.7 2.7H2.7C1.2 24 0 22.8 0 21.3V2.6C0 1.2 1.2 0 2.6 0z"/><rect x="0" y="7.6" width="29" height="2" fill="#ffffff"/></svg>
<div class="t" style="left:908px;top:160.89px;font-size:23.4px;color:#262626">CountriesAndCities</div>
<svg style="left:1120px;top:152px" width="8" height="20" viewBox="0 0 8 20"><path d="M1.5 2l5 8-5 8" fill="none" stroke="#8a8a8a" stroke-width="1.8" stroke-linecap="round"/></svg>
<svg style="left:1146px;top:151px" width="25" height="20.7" viewBox="0 0 29 24"><path fill="#868a8f" d="M2.6 0h7c1.1 0 1.7.3 2.5 1.1l1.2 1.3H26.2c1.6 0 2.8 1.2 2.8 2.8V21.3c0 1.5-1.2 2.7-2.7 2.7H2.7C1.2 24 0 22.8 0 21.3V2.6C0 1.2 1.2 0 2.6 0z"/><rect x="0" y="7.6" width="29" height="2" fill="#ffffff"/></svg>
<div class="t" style="left:1184px;top:160.89px;font-size:23.4px;color:#262626">Views</div>
<svg style="left:1256px;top:152px" width="8" height="20" viewBox="0 0 8 20"><path d="M1.5 2l5 8-5 8" fill="none" stroke="#8a8a8a" stroke-width="1.8" stroke-linecap="round"/></svg>
<svg style="left:1280px;top:150px" width="25" height="21.7" viewBox="0 0 30 26"><path fill="#f07a48" d="M17.6,0.2C24.3,4.4 28,11 26.2,17.6L28.9,25C27.2,22.8 25,22.4 22.3,23.6C16.5,27.1 6.5,25.2 0.2,16.6C5,19.6 11.5,20 16.4,18L3.2,4.5C7.8,7.8 11.3,10 14.5,11.6L6.9,2.8C11.5,6.6 15.5,10 19.9,12.4C21.4,8.5 20.5,4 17.6,0.2Z"/></svg>
<div class="t" style="left:1317px;top:160.89px;font-size:23.4px;color:#262626">CountriesListView</div>
<svg style="left:1517px;top:152px" width="8" height="20" viewBox="0 0 8 20"><path d="M1.5 2l5 8-5 8" fill="none" stroke="#8a8a8a" stroke-width="1.8" stroke-linecap="round"/></svg>
<div class="a" style="left:1541px;top:146px;width:28px;height:28px;border-radius:6px;background:#55b6d4"></div>
<div class="t" style="left:1548.5px;top:160.02px;font-size:21px;color:#fff;font-weight:bold">P</div>
<div class="t" style="left:1580px;top:160.89px;font-size:23.4px;color:#262626">body</div>
<svg style="left:600px;top:1852px" width="30" height="19" viewBox="0 0 30 19"><path d="M3 0h20c1.2 0 2.2.6 2.8 1.5l3.6 6c.4.6.4 1.4 0 2l-3.6 6c-.6.9-1.6 1.5-2.8 1.5H3c-1.7 0-3-1.3-3-3V3c0-1.7 1.3-3 3-3z" fill="#3478f6"/></svg>
<div class="t" style="right:89px;top:1861.6px;font-size:23.4px;color:#8a8a8a;letter-spacing:0.4px">Line: 19&nbsp;&nbsp;Col: 19</div>
<div class="a" style="left:2954px;top:1849px;width:1.5px;height:23px;background:#dcdcdc"></div>
<svg style="left:2973px;top:1848px" width="26" height="25" viewBox="0 0 26 25"><rect x="1" y="1" width="24" height="23" rx="4" fill="none" stroke="#6e6e6e" stroke-width="2"/><rect x="4.5" y="15" width="17" height="5.5" rx="1.5" fill="#6e6e6e"/></svg>
<div class="a" style="left:577px;top:900.0px;width:1600px;height:44px;background:#ecf3fe"></div>
<div class="a" style="left:591px;top:900.0px;width:10px;height:131.5px;border-radius:5px;background:#aecbfa;border:2px solid #2f74f6"></div>
<div class="a" style="left:591px;top:1072px;width:10px;height:10px;border-radius:50%;background:#aecbfa;border:2px solid #2f74f6"></div>
<div class="a" style="left:683px;top:189px;width:14px;height:183.0px;border-radius:0 0 7px 7px;background:#e6e6e6;box-shadow:0 -1px 0 rgba(255,255,255,0.55)"></div>
<div class="a" style="left:683px;top:504.0px;width:14px;height:836.0px;border-radius:7px;background:#e6e6e6;box-shadow:0 -1px 0 rgba(255,255,255,0.55)"></div>
<div class="a" style="left:683px;top:768.0px;width:14px;height:528.0px;border-radius:7px;background:#d2d2d2;box-shadow:0 -1px 0 rgba(255,255,255,0.55)"></div>
<div class="a" style="left:683px;top:812.0px;width:14px;height:440.0px;border-radius:7px;background:#bfbfbf;box-shadow:0 -1px 0 rgba(255,255,255,0.55)"></div>
<div class="a" style="left:683px;top:856.0px;width:14px;height:308.0px;border-radius:7px;background:#acacac;box-shadow:0 -1px 0 rgba(255,255,255,0.55)"></div>
<div class="a" style="left:683px;top:900.0px;width:14px;height:109.0px;border-radius:7px 7px 0 0;background:#9f9f9f;box-shadow:0 -1px 0 rgba(255,255,255,0.55)"></div>
<div class="a" style="left:683px;top:1011.0px;width:14px;height:109.0px;border-radius:0 0 7px 7px;background:#9f9f9f"></div>
<div class="a" style="left:683px;top:1009.0px;width:14px;height:2px;background:#e4e4e4"></div>
<div class="a" style="left:683px;top:1384.0px;width:14px;height:132.0px;border-radius:7px;background:#e6e6e6;box-shadow:0 -1px 0 rgba(255,255,255,0.55)"></div>
<div class="a" style="left:683px;top:900.0px;width:14px;height:44px;background:rgba(60,110,170,0.10)"></div>
<div class="t" style="right:2350px;top:218.93px;font-size:30.5px;color:#a3a3a3;letter-spacing:-1.2px">3</div>
<div class="cl" style="top:221.74px"><span class="c">//  CountriesAndCities</span></div>
<div class="t" style="right:2350px;top:262.93px;font-size:30.5px;color:#a3a3a3;letter-spacing:-1.2px">4</div>
<div class="cl" style="top:265.74px"><span class="c">//</span></div>
<div class="t" style="right:2350px;top:306.93px;font-size:30.5px;color:#a3a3a3;letter-spacing:-1.2px">5</div>
<div class="cl" style="top:309.74px"><span class="c">//  Created by Russell Gordon on 2024-06-08.</span></div>
<div class="t" style="right:2350px;top:350.93px;font-size:30.5px;color:#a3a3a3;letter-spacing:-1.2px">6</div>
<div class="cl" style="top:353.74px"><span class="c">//</span></div>
<div class="t" style="right:2350px;top:394.93px;font-size:30.5px;color:#a3a3a3;letter-spacing:-1.2px">7</div>
<div class="t" style="right:2350px;top:438.93px;font-size:30.5px;color:#a3a3a3;letter-spacing:-1.2px">8</div>
<div class="cl" style="top:441.74px"><span class="k">import</span> SwiftUI</div>
<div class="t" style="right:2350px;top:482.93px;font-size:30.5px;color:#a3a3a3;letter-spacing:-1.2px">9</div>
<div class="t" style="right:2350px;top:526.93px;font-size:30.5px;color:#a3a3a3;letter-spacing:-1.2px">10</div>
<div class="cl" style="top:529.74px"><span class="k">struct</span> <span class="dt">CountriesListView</span>: <span class="ty">View</span> {</div>
<div class="t" style="right:2350px;top:570.93px;font-size:30.5px;color:#a3a3a3;letter-spacing:-1.2px">11</div>
<div class="t" style="right:2350px;top:614.93px;font-size:30.5px;color:#a3a3a3;letter-spacing:-1.2px">12</div>
<div class="cl" style="top:617.74px">    <span class="c">// </span><span class="m">MARK: Stored proeprties</span></div>
<div class="t" style="right:2350px;top:658.93px;font-size:30.5px;color:#a3a3a3;letter-spacing:-1.2px">13</div>
<div class="cl" style="top:661.74px">    <span class="ty">@State</span> <span class="k">private</span> <span class="k">var</span> <span class="do">viewModel</span> = <span class="pt">CountriesListViewModel</span>()</div>
<div class="t" style="right:2350px;top:702.93px;font-size:30.5px;color:#a3a3a3;letter-spacing:-1.2px">14</div>
<div class="t" style="right:2350px;top:746.93px;font-size:30.5px;color:#a3a3a3;letter-spacing:-1.2px">15</div>
<div class="cl" style="top:749.74px">    <span class="c">// </span><span class="m">MARK: Computed properties</span></div>
<div class="t" style="right:2350px;top:790.93px;font-size:30.5px;color:#a3a3a3;letter-spacing:-1.2px">16</div>
<div class="cl" style="top:793.74px">    <span class="k">var</span> <span class="do">body</span>: <span class="k">some</span> <span class="ty">View</span> {</div>
<div class="t" style="right:2350px;top:834.93px;font-size:30.5px;color:#a3a3a3;letter-spacing:-1.2px">17</div>
<div class="cl" style="top:837.74px">        <span class="ty">NavigationStack</span> {</div>
<div class="t" style="right:2350px;top:878.93px;font-size:30.5px;color:#a3a3a3;letter-spacing:-1.2px">18</div>
<div class="cl" style="top:881.74px">            <span class="ty">List</span>(<span class="pp">viewModel</span>.<span class="pp">countriesWithCities</span>) { country <span class="k">in</span></div>
<div class="t" style="right:2350px;top:920.93px;font-size:30.5px;color:#1f1f1f;letter-spacing:-1.2px">19</div>
<div class="cl" style="top:925.74px">                <span class="ty">NavigationLink</span> {</div>
<div class="t" style="right:2350px;top:966.93px;font-size:30.5px;color:#a3a3a3;letter-spacing:-1.2px">20</div>
<div class="cl" style="top:969.74px">                    <span class="pt">CitiesListView</span>(<span class="pp">country</span>: country)</div>
<div class="t" style="right:2350px;top:1010.93px;font-size:30.5px;color:#a3a3a3;letter-spacing:-1.2px">21</div>
<div class="cl" style="top:1013.74px">                } <span class="of">label</span>: {</div>
<div class="t" style="right:2350px;top:1054.93px;font-size:30.5px;color:#a3a3a3;letter-spacing:-1.2px">22</div>
<div class="cl" style="top:1057.74px">                    <span class="ty">Text</span>(country.name)</div>
<div class="t" style="right:2350px;top:1098.93px;font-size:30.5px;color:#a3a3a3;letter-spacing:-1.2px">23</div>
<div class="cl" style="top:1101.74px">                }</div>
<div class="t" style="right:2350px;top:1142.93px;font-size:30.5px;color:#a3a3a3;letter-spacing:-1.2px">24</div>
<div class="cl" style="top:1145.74px">            }</div>
<div class="t" style="right:2350px;top:1186.93px;font-size:30.5px;color:#a3a3a3;letter-spacing:-1.2px">25</div>
<div class="cl" style="top:1189.74px">            .<span class="of">navigationTitle</span>(<span class="st">"Countries"</span>)</div>
<div class="t" style="right:2350px;top:1230.93px;font-size:30.5px;color:#a3a3a3;letter-spacing:-1.2px">26</div>
<div class="cl" style="top:1233.74px">        }</div>
<div class="t" style="right:2350px;top:1274.93px;font-size:30.5px;color:#a3a3a3;letter-spacing:-1.2px">27</div>
<div class="cl" style="top:1277.74px">    }</div>
<div class="t" style="right:2350px;top:1318.93px;font-size:30.5px;color:#a3a3a3;letter-spacing:-1.2px">28</div>
<div class="cl" style="top:1321.74px">}</div>
<div class="t" style="right:2350px;top:1362.93px;font-size:30.5px;color:#a3a3a3;letter-spacing:-1.2px">29</div>
<div class="t" style="right:2350px;top:1406.93px;font-size:30.5px;color:#a3a3a3;letter-spacing:-1.2px">30</div>
<div class="cl" style="top:1409.74px"><span class="of">#Preview</span> {</div>
<div class="t" style="right:2350px;top:1450.93px;font-size:30.5px;color:#a3a3a3;letter-spacing:-1.2px">31</div>
<div class="cl" style="top:1453.74px">    <span class="pt">CountriesListView</span>()</div>
<div class="t" style="right:2350px;top:1494.93px;font-size:30.5px;color:#a3a3a3;letter-spacing:-1.2px">32</div>
<div class="cl" style="top:1497.74px">}</div>
<div class="t" style="right:2350px;top:1538.93px;font-size:30.5px;color:#a3a3a3;letter-spacing:-1.2px">33</div>
<div class="a" style="left:2176px;top:189px;width:1px;height:1643px;background:#e6e6e6"></div>
<div class="a" style="left:2177px;top:189px;width:27px;height:1643px;background:#fafafa"></div>
<div class="a" style="left:2204px;top:189px;width:3px;height:1643px;background:#e8e8e8"></div>
<div class="a" style="left:2184px;top:251px;width:16px;height:1218px;background:#7f7f7f;border-radius:8px"></div>
<div class="a" style="left:2207px;top:189px;width:817px;height:1643px;background:#f0f0f0"></div>
<div class="a" style="left:2232px;top:214px;width:63px;height:52px;border-radius:12px;background:#fff;box-shadow:0 0 0 0.5px rgba(0,0,0,0.06),0 1px 4px rgba(0,0,0,0.16)"></div>
<svg style="left:2253px;top:224px" width="22" height="31" viewBox="0 0 22 31"><path d="M4.5 1.5h13M6.5 1.5l1.5 10M15.5 1.5l-1.5 10M3 17c0-3 2.5-5.5 5-5.5h6c2.5 0 5 2.5 5 5.5zM11 17v12.5" fill="none" stroke="#3d3d3d" stroke-width="2.2" stroke-linecap="round" stroke-linejoin="round"/></svg>
<div class="a" style="left:2315px;top:214px;width:258px;height:52px;border-radius:12px;background:#cfdffa;box-shadow:0 1px 3px rgba(0,0,0,0.10)"></div>
<svg style="left:2332px;top:227px" width="23" height="26" viewBox="0 0 23 26"><path d="M5.5 1h12M3.5 4.5h16" stroke="#3478f6" stroke-width="1.6"/><rect x="1" y="8" width="21" height="17" rx="3" fill="none" stroke="#3478f6" stroke-width="2.2"/></svg>
<div class="t" style="left:2367px;top:240.89px;font-size:23.4px;color:#2f7cf6">CountriesListView</div>
<div class="a" style="left:2291px;top:586px;width:10px;height:48px;border-radius:2px;background:#2b2b2b"></div>
<div class="a" style="left:2291px;top:678px;width:10px;height:93px;border-radius:2px;background:#2b2b2b"></div>
<div class="a" style="left:2291px;top:797px;width:10px;height:92px;border-radius:2px;background:#2b2b2b"></div>
<div class="a" style="left:2930px;top:739px;width:11px;height:150px;border-radius:2px;background:#2b2b2b"></div>
<div class="a" style="left:2298px;top:348px;width:635px;height:1325px;border-radius:122px;background:#333;box-shadow:0 0 1px rgba(0,0,0,0.5)"></div>
<div class="a" style="left:2306px;top:356px;width:619px;height:1309px;border-radius:114px;background:#000"></div>
<div class="a" style="left:2792px;top:348px;width:9px;height:8px;background:#1c1c1c"></div>
<div class="a" style="left:2298px;top:487px;width:8px;height:9px;background:#1c1c1c"></div>
<div class="a" style="left:2925px;top:487px;width:8px;height:9px;background:#1c1c1c"></div>
<div class="a" style="left:2433px;top:1665px;width:9px;height:8px;background:#1c1c1c"></div>
<div class="a" style="left:2322px;top:372px;width:588px;height:1278px;border-radius:98px;background:#f2f2f7"></div>
<div class="a" style="left:2523px;top:389px;width:187px;height:55px;border-radius:28px;background:#000"></div>
<div class="t" style="left:2347px;top:555.92px;font-size:49.3px;font-weight:bold;color:#000;letter-spacing:-0.3px">Countries</div>
<div class="a" style="left:2352px;top:597px;width:529px;height:330px;border-radius:14px;background:#fff"></div>
<div class="t" style="left:2383px;top:630.66px;font-size:25.5px;color:#000">Canada</div>
<svg style="left:2839px;top:620.0px" width="12" height="18" viewBox="0 0 12 18"><path d="M2 1.5l7.5 7.5L2 16.5" fill="none" stroke="#bcbcbe" stroke-width="2.9" stroke-linecap="round" stroke-linejoin="round"/></svg>
<div class="a" style="left:2382px;top:662px;width:499px;height:1px;background:#e3e3e7"></div>
<div class="t" style="left:2383px;top:696.66px;font-size:25.5px;color:#000">United States</div>
<svg style="left:2839px;top:686.0px" width="12" height="18" viewBox="0 0 12 18"><path d="M2 1.5l7.5 7.5L2 16.5" fill="none" stroke="#bcbcbe" stroke-width="2.9" stroke-linecap="round" stroke-linejoin="round"/></svg>
<div class="a" style="left:2382px;top:728px;width:499px;height:1px;background:#e3e3e7"></div>
<div class="t" style="left:2383px;top:762.66px;font-size:25.5px;color:#000">China</div>
<svg style="left:2839px;top:752.0px" width="12" height="18" viewBox="0 0 12 18"><path d="M2 1.5l7.5 7.5L2 16.5" fill="none" stroke="#bcbcbe" stroke-width="2.9" stroke-linecap="round" stroke-linejoin="round"/></svg>
<div class="a" style="left:2382px;top:794px;width:499px;height:1px;background:#e3e3e7"></div>
<div class="t" style="left:2383px;top:828.66px;font-size:25.5px;color:#000">Germany</div>
<svg style="left:2839px;top:818.0px" width="12" height="18" viewBox="0 0 12 18"><path d="M2 1.5l7.5 7.5L2 16.5" fill="none" stroke="#bcbcbe" stroke-width="2.9" stroke-linecap="round" stroke-linejoin="round"/></svg>
<div class="a" style="left:2382px;top:860px;width:499px;height:1px;background:#e3e3e7"></div>
<div class="t" style="left:2383px;top:894.66px;font-size:25.5px;color:#000">Mexico</div>
<svg style="left:2839px;top:884.0px" width="12" height="18" viewBox="0 0 12 18"><path d="M2 1.5l7.5 7.5L2 16.5" fill="none" stroke="#bcbcbe" stroke-width="2.9" stroke-linecap="round" stroke-linejoin="round"/></svg>
<div class="a" style="left:2232px;top:1756px;width:163px;height:52px;border-radius:12px;background:#fff;box-shadow:0 0 0 0.5px rgba(0,0,0,0.06),0 1px 4px rgba(0,0,0,0.16)"></div>
<div class="a" style="left:2415px;top:1756px;width:63px;height:52px;border-radius:12px;background:#fff;box-shadow:0 0 0 0.5px rgba(0,0,0,0.06),0 1px 4px rgba(0,0,0,0.16)"></div>
<div class="a" style="left:2498px;top:1756px;width:53px;height:52px;border-radius:12px;background:#fff;box-shadow:0 0 0 0.5px rgba(0,0,0,0.06),0 1px 4px rgba(0,0,0,0.16)"></div>
<div class="a" style="left:2792px;top:1756px;width:208px;height:52px;border-radius:12px;background:#fff;box-shadow:0 0 0 0.5px rgba(0,0,0,0.06),0 1px 4px rgba(0,0,0,0.16)"></div>
<svg style="left:2250px;top:1769px" width="26" height="26" viewBox="0 0 26 26"><circle cx="13" cy="13" r="13" fill="#3478f6"/><path d="M10 7.5v11l9-5.5z" fill="#fff"/></svg>
<svg style="left:2298px;top:1770px" width="24" height="24" viewBox="0 0 24 24"><rect x="1" y="1" width="22" height="22" rx="2" fill="none" stroke="#4a4a4a" stroke-width="2"/><path d="M8 5.5l9 6.5-4 .8 2.8 5-1.8 1-2.8-5-3.2 3z" fill="#4a4a4a"/></svg>
<svg style="left:2352px;top:1773px" width="24" height="19" viewBox="0 0 24 19"><g fill="none" stroke="#4a4a4a" stroke-width="1.8"><rect x="1" y="1" width="5" height="7" rx="1.2"/><rect x="9.5" y="1" width="5" height="7" rx="1.2"/><rect x="18" y="1" width="5" height="7" rx="1.2"/><rect x="1" y="11" width="5" height="7" rx="1.2"/><rect x="9.5" y="11" width="5" height="7" rx="1.2"/><rect x="18" y="11" width="5" height="7" rx="1.2"/></g></svg>
<svg style="left:2434px;top:1770px" width="25" height="25" viewBox="0 0 25 25"><rect x="1" y="1" width="23" height="10" rx="5" fill="none" stroke="#4a4a4a" stroke-width="2"/><circle cx="6" cy="6" r="3" fill="#4a4a4a"/><rect x="0" y="14" width="25" height="11" rx="5.5" fill="#4a4a4a"/><circle cx="19" cy="19.5" r="3" fill="#fff"/></svg>
<svg style="left:2517px;top:1771px" width="16" height="23" viewBox="0 0 16 23"><rect x="1" y="1" width="14" height="21" rx="3" fill="#d4d4d4" stroke="#4a4a4a" stroke-width="2"/><path d="M5.5 19h5M6 3.5h4" stroke="#4a4a4a" stroke-width="1.3"/></svg>
<svg style="left:2811px;top:1769px" width="25" height="25" viewBox="0 0 25 25"><circle cx="10" cy="10" r="8.8" fill="none" stroke="#4a4a4a" stroke-width="2.8"/><path d="M16.5 16.5l7 7" stroke="#4a4a4a" stroke-width="3.2" stroke-linecap="round"/><path d="M6 10h8" stroke="#4a4a4a" stroke-width="2.2"/></svg>
<svg style="left:2859px;top:1769px" width="25" height="25" viewBox="0 0 25 25"><circle cx="10" cy="10" r="8.8" fill="none" stroke="#4a4a4a" stroke-width="2.8"/><path d="M16.5 16.5l7 7" stroke="#4a4a4a" stroke-width="3.2" stroke-linecap="round"/><path d="M8.5 7.5l2-1.5v8.5" fill="none" stroke="#4a4a4a" stroke-width="1.8"/></svg>
<svg style="left:2907px;top:1769px" width="25" height="25" viewBox="0 0 25 25"><circle cx="10" cy="10" r="8.8" fill="none" stroke="#4a4a4a" stroke-width="2.8"/><path d="M16.5 16.5l7 7" stroke="#4a4a4a" stroke-width="3.2" stroke-linecap="round"/><rect x="6.5" y="6.5" width="7" height="7" fill="none" stroke="#4a4a4a" stroke-width="2"/></svg>
<svg style="left:2955px;top:1769px" width="25" height="25" viewBox="0 0 25 25"><circle cx="10" cy="10" r="8.8" fill="none" stroke="#4a4a4a" stroke-width="2.8"/><path d="M16.5 16.5l7 7" stroke="#4a4a4a" stroke-width="3.2" stroke-linecap="round"/><path d="M6 10h8M10 6v8" stroke="#4a4a4a" stroke-width="2.2"/></svg>
</body></html>
